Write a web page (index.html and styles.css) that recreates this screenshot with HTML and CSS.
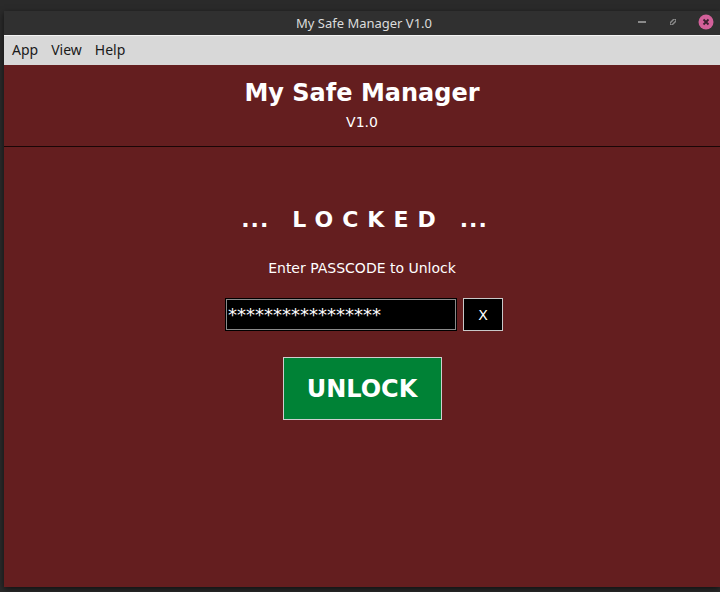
FILE: index.html
```html
<!doctype html>
<html lang="en">
<head>
    <meta charset="UTF-8">
    <title>My Safe Manager V1.0</title>
    <link rel="stylesheet" href="styles.css">
</head>
<body>
<div class="window">
    <div class="titlebar">
        <span class="title">My Safe Manager V1.0</span>
        <span class="controls">
            <svg class="ctl" width="12" height="12" viewBox="0 0 12 12"><rect x="2" y="5" width="8" height="2" fill="#8a8a8a"/></svg>
            <svg class="ctl" width="12" height="12" viewBox="0 0 12 12"><path d="M3 9 L3 6 L6 3 L9 3 L9 6 L6 9 Z" fill="#8a8a8a"/><path d="M4 8 L8 4" stroke="#2f2f2f" stroke-width="1.2"/></svg>
            <svg class="ctl close" width="16" height="16" viewBox="0 0 16 16"><circle cx="8" cy="8" r="7.5" fill="#d2609a"/><path d="M5.5 5.5 L10.5 10.5 M10.5 5.5 L5.5 10.5" stroke="#3a2030" stroke-width="1.8"/></svg>
        </span>
    </div>
    <div class="menubar">
        <span>App</span>
        <span>View</span>
        <span>Help</span>
    </div>
    <div class="content">
        <div class="header">
            <h1>My Safe Manager</h1>
            <div class="version">V1.0</div>
        </div>
        <div class="lock">
            <h2><span class="dots">...</span><span class="word">LOCKED</span><span class="dots">...</span></h2>
            <p>Enter PASSCODE to Unlock</p>
            <div class="entry_row">
                <input id="passcode" value="*****************" readonly>
                <button class="clear">X</button>
            </div>
            <button class="unlock">UNLOCK</button>
        </div>
    </div>
</div>
</body>
</html>
```

FILE: styles.css
```css
body {
    margin: 0;
    background-color: #2a2a2a;
    height: 592px;
    overflow: hidden;
    font-family: "DejaVu Sans", sans-serif;
}

.window {
    margin: 11px 0 0 4px;
    height: 576px;
    display: flex;
    flex-direction: column;
    box-shadow: 0 2px 6px rgba(0, 0, 0, 0.6);
}

.titlebar {
    height: 24px;
    background-color: #303030;
    display: flex;
    align-items: center;
    justify-content: center;
    position: relative;
    color: #dcdcdc;
    font-family: "Noto Sans", sans-serif;
    font-size: 13px;
}

.title {
    margin-left: 4px;
}

.controls {
    position: absolute;
    right: 6px;
    top: 3px;
    display: flex;
    align-items: center;
    gap: 19px;
}

.ctl {
    display: block;
}

.menubar {
    height: 30px;
    box-sizing: border-box;
    border-top: 1px solid #f4f4f4;
    padding-bottom: 2px;
    background-color: #d8d8d8;
    display: flex;
    align-items: center;
    padding-left: 8px;
    gap: 13px;
    font-family: "Noto Sans", sans-serif;
    font-size: 14px;
    color: #1a1a1a;
}

.content {
    flex: 1;
    background-color: #641e1f;
    color: #ffffff;
}

.header {
    text-align: center;
    padding-top: 13px;
    height: 68px;
    border-bottom: 1px solid #1a0606;
}

h1 {
    margin: 0;
    font-size: 24px;
    line-height: 30px;
    font-weight: bold;
}

.version {
    font-size: 14px;
    line-height: 18px;
    margin-top: 5px;
}

.lock {
    display: flex;
    flex-direction: column;
    align-items: center;
}

h2 {
    margin: 58px 0 0;
    font-size: 22px;
    line-height: 30px;
    font-weight: bold;
    display: flex;
    gap: 24px;
    margin-left: 4px;
}

.dots {
    letter-spacing: 1px;
    margin-right: -1px;
}

.word {
    letter-spacing: 9px;
    margin-right: -9px;
}

.lock p {
    margin: 24px 0 0;
    font-size: 14px;
    line-height: 18px;
}

.entry_row {
    display: flex;
    gap: 6px;
    margin-top: 21px;
    margin-left: 4px;
}

#passcode {
    box-sizing: border-box;
    width: 232px;
    height: 33px;
    padding: 0 2px;
    background-color: #000;
    color: #ffffff;
    border: 1px solid #000;
    outline: 1px solid #8a8a8a;
    outline-offset: -2px;
    font-family: "DejaVu Sans", sans-serif;
    font-size: 18px;
}

.clear {
    box-sizing: border-box;
    width: 40px;
    height: 33px;
    background-color: #000;
    color: #ffffff;
    border: 1px solid #c8c8c8;
    font-family: "DejaVu Sans", sans-serif;
    font-size: 14px;
}

.unlock {
    margin-top: 26px;
    width: 159px;
    height: 63px;
    background-color: #008236;
    color: #ffffff;
    border: 1px solid #cfcfcf;
    font-family: "DejaVu Sans", sans-serif;
    font-size: 24px;
    font-weight: bold;
}
```
